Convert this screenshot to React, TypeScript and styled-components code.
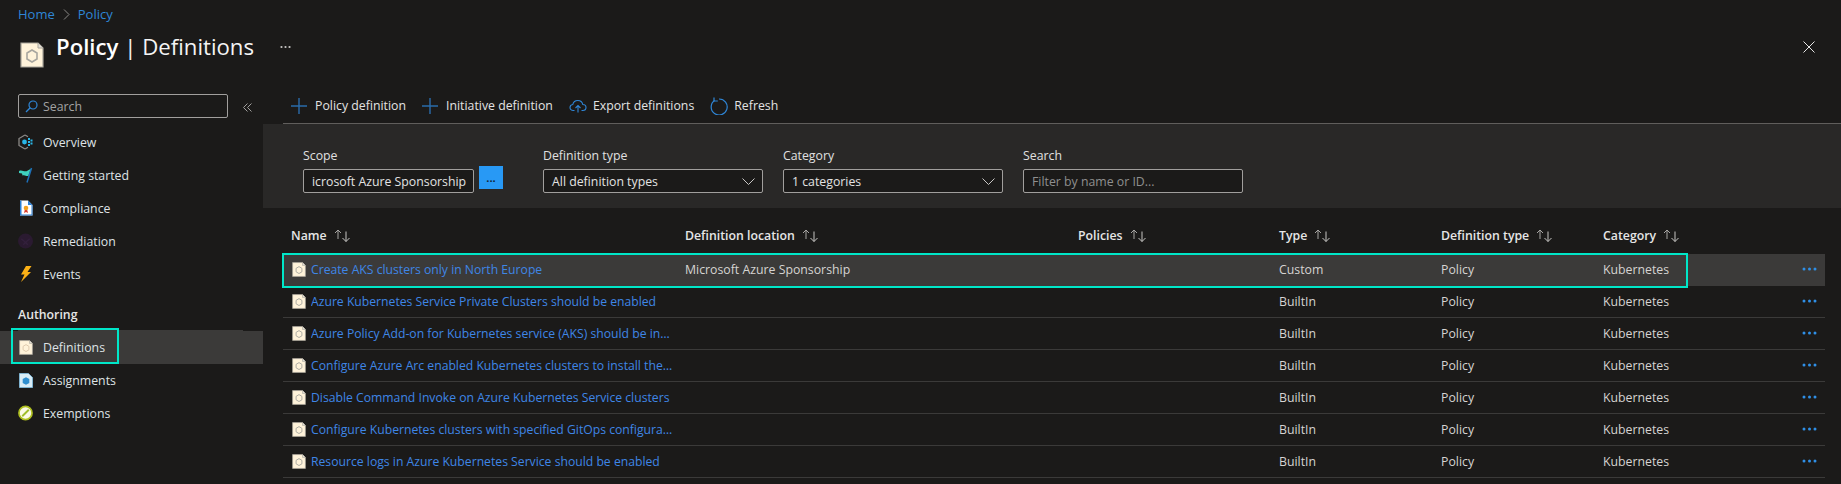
import * as React from "react";
import styled, { createGlobalStyle } from "styled-components";

const GlobalStyle = createGlobalStyle`
  html, body {
    margin: 0;
    background: #1b1a19;
    font-family: "Open Sans", "Noto Sans", sans-serif;
    font-size: 12.3px;
    color: #dcdcdc;
  }
`;

const Page = styled.div`
  width: 1841px;
  height: 484px;
  overflow: hidden;
  display: flex;
  flex-direction: column;
  background: #1b1a19;
`;

const Breadcrumb = styled.div`
  height: 28px;
  padding-left: 18px;
  display: flex;
  align-items: center;
  gap: 8px;
  color: #2f86d6;
  font-size: 13px;
`;

const Chevron = styled.span`
  display: inline-flex;
  color: #8a8886;
`;

const TitleBar = styled.div`
  height: 60px;
  padding: 0 26px 0 20px;
  display: flex;
  align-items: flex-start;
`;

const TitleIcon = styled.div`
  margin-top: 14px;
  margin-right: 12px;
  display: flex;
`;

const Title = styled.h1`
  margin: 1px 0 0;
  font-size: 22.2px;
  line-height: 35px;
  font-weight: 400;
  color: #f4f4f4;
  b {
    font-weight: 600;
    color: #fff;
  }
`;

const TitleMore = styled.div`
  margin: 17px 0 0 26px;
  display: flex;
`;

const CloseButton = styled.div`
  margin: 13px 0 0 auto;
  display: flex;
`;

const Content = styled.div`
  flex: 1;
  display: flex;
  min-height: 0;
`;

const Sidebar = styled.nav`
  width: 263px;
  flex-shrink: 0;
  padding-top: 6px;
`;

const SearchRow = styled.div`
  height: 32px;
  padding-left: 18px;
  display: flex;
  align-items: flex-start;
`;

const SearchBox = styled.div`
  box-sizing: border-box;
  width: 210px;
  height: 24px;
  border: 1px solid #a19f9d;
  border-radius: 2px;
  padding-left: 6px;
  display: flex;
  align-items: center;
  gap: 5px;
  color: #a3a3a3;
`;

const Collapse = styled.div`
  margin: 9px 0 0 15px;
  display: flex;
`;

const NavItem = styled.div<{ $selected?: boolean }>`
  position: relative;
  height: 33px;
  padding-left: 18px;
  padding-bottom: 1px;
  box-sizing: border-box;
  display: flex;
  align-items: center;
  gap: 10px;
  color: #dfe3e6;
  background: ${(p) => (p.$selected ? "#3b3a39" : "transparent")};
`;

const NavIcon = styled.span`
  width: 15px;
  display: flex;
  justify-content: center;
`;

const NavHeading = styled.div`
  box-sizing: border-box;
  height: 40px;
  margin: 0 20px 0 18px;
  padding-top: 8px;
  line-height: 32px;
  font-weight: 600;
  color: #e6e6e6;
  border-bottom: 1px solid #3b3a39;
`;

const NavHighlight = styled.div`
  position: absolute;
  left: 11px;
  top: -3px;
  width: 108px;
  height: 36px;
  box-sizing: border-box;
  border: 2px solid #00e6c8;
`;

const Main = styled.main`
  flex: 1;
  min-width: 0;
  display: flex;
  flex-direction: column;
`;

const Toolbar = styled.div`
  box-sizing: border-box;
  height: 36px;
  margin-left: 20px;
  padding-left: 8px;
  display: flex;
  align-items: center;
  gap: 16px;
  border-bottom: 1px solid #605e5c;
`;

const ToolButton = styled.div<{ $gap?: number }>`
  display: flex;
  align-items: center;
  gap: ${(p) => p.$gap ?? 8}px;
  color: #e3e3e3;
`;

const FilterPanel = styled.section`
  box-sizing: border-box;
  height: 84px;
  padding: 24px 0 0 40px;
  display: flex;
  gap: 20px;
  background: #292827;
`;

const Field = styled.div`
  width: 220px;
`;

const FieldLabel = styled.div`
  height: 21px;
  line-height: 16px;
  color: #e0e0e0;
`;

const FieldRow = styled.div`
  width: 200px;
  display: flex;
  align-items: flex-start;
  gap: 5px;
`;

const Control = styled.div<{ $placeholder?: boolean }>`
  box-sizing: border-box;
  flex: 1;
  min-width: 0;
  height: 24px;
  padding: 0 7px 0 8px;
  display: flex;
  align-items: center;
  justify-content: space-between;
  background: #1b1a19;
  border: 1px solid #a19f9d;
  border-radius: 2px;
  white-space: nowrap;
  overflow: hidden;
  color: ${(p) => (p.$placeholder ? "#8f8f8f" : "#e3e3e3")};
`;

const PickButton = styled.div`
  width: 24px;
  height: 23px;
  margin-top: -3px;
  display: flex;
  align-items: center;
  justify-content: center;
  background: #2899f5;
  color: #10253a;
  font-weight: 700;
  font-size: 11px;
  line-height: 12px;
`;

const COLUMNS = "394px 393px 201px 162px 162px 1fr 32px";

const Table = styled.div`
  margin: 0 16px 0 20px;
`;

const HeaderRow = styled.div`
  box-sizing: border-box;
  height: 46px;
  padding: 8px 0 0 8px;
  display: grid;
  grid-template-columns: ${COLUMNS};
  align-items: center;
`;

const HeaderCell = styled.div`
  display: flex;
  align-items: center;
  gap: 7px;
  font-weight: 600;
  color: #e6e6e6;
`;

const Row = styled.div<{ $selected?: boolean }>`
  position: relative;
  box-sizing: border-box;
  height: 32px;
  padding-left: 8px;
  display: grid;
  grid-template-columns: ${COLUMNS};
  align-items: center;
  border-bottom: 1px solid ${(p) => (p.$selected ? "transparent" : "#3b3a39")};
  background: ${(p) => (p.$selected ? "#3b3a39" : "transparent")};
  color: #d6d4d2;
`;

const NameCell = styled.div`
  display: flex;
  align-items: center;
  gap: 5px;
  min-width: 0;
  padding: 0 10px 0 1px;
`;

const NameLink = styled.span`
  color: #3f86e6;
  flex: 1;
  min-width: 0;
  max-width: 366px;
  font-size: 12.2px;
  white-space: nowrap;
  overflow: hidden;
  text-overflow: ellipsis;
`;

const RowActions = styled.div`
  display: flex;
  justify-content: flex-end;
  padding: 0 8px 2px 0;
`;

const RowHighlight = styled.div`
  position: absolute;
  left: -1px;
  top: -1px;
  width: 1406px;
  height: 35px;
  box-sizing: border-box;
  border: 2px solid #00e6c8;
  pointer-events: none;
`;

const PolicyIcon = ({ size = 15, faded = false }: { size?: number; faded?: boolean }) => (
  <svg width={size} height={Math.round(size * 1.08)} viewBox="0 0 24 26" preserveAspectRatio="none" style={{ flexShrink: 0 }}>
    <path d="M1 1h17l5 5v19H1z" fill="#fff3da" stroke="#a8a49a" strokeWidth="1.200" />
    <path d="M18 1v5h5" fill="#e4e0d6" stroke="#a8a49a" strokeWidth="1" />
    <path
      d="M12 8l5 3v6l-5 3-5-3v-6z"
      fill="none"
      stroke={faded ? "#dcc8ac" : "#a8a69f"}
      strokeWidth="1.600"
    />
  </svg>
);

const OverviewIcon = () => (
  <svg width="15" height="16" viewBox="0 0 15 16">
    <path d="M7 1L1 4.500v7L7 15" fill="none" stroke="#8a8886" strokeWidth="1.300" />
    <path d="M7 1l3 1.700M7 15l3-1.700" fill="none" stroke="#8a8886" strokeWidth="1.300" />
    <circle cx="6.500" cy="8" r="2.400" fill="#29b6e8" />
    <g fill="#29b6e8">
      <rect x="10" y="4" width="2" height="2" />
      <rect x="12.500" y="5.500" width="2" height="2" />
      <rect x="10" y="7" width="2" height="2" />
      <rect x="12.500" y="8.500" width="2" height="2" />
      <rect x="10" y="10" width="2" height="2" />
    </g>
  </svg>
);

const FlagIcon = () => (
  <svg width="15" height="16" viewBox="0 0 15 16">
    <path d="M9 15.500L13.500 1" stroke="#1d6fb8" strokeWidth="1.500" fill="none" />
    <path d="M1 4c3-1.400 5 1 7.500 .2L12.500 2 10.200 9C8 9.500 7 7.500 4.500 8.500L4 6.500 1 6z" fill="#3fd0bd" />
  </svg>
);

const ComplianceIcon = () => (
  <svg width="14" height="16" viewBox="0 0 14 16">
    <path d="M1 .500h8l4.500 4.500v10.500H1z" fill="#fff" />
    <path d="M9 .500l4.500 4.500H9z" fill="#2a7fd4" />
    <path d="M1 .500h1.500v15H1zM1 14.500h12.500v1H1zM12.500 5h1v10.500h-1z" fill="#2a7fd4" />
    <path d="M6 9l-1 4 2-1 2 1-1-4z" fill="#d8392b" />
    <circle cx="7" cy="8" r="2.300" fill="#f4a21e" />
  </svg>
);

const RemediationIcon = () => (
  <svg width="16" height="16" viewBox="0 0 16 16">
    <circle cx="8" cy="8" r="8" fill="#2a1a30" />
    <path d="M3.500 5.500L8 9.500l4.500-4M5.500 12L8 9.500l2.500 2.500" stroke="#33203c" strokeWidth="1.500" fill="none" />
  </svg>
);

const BoltIcon = () => (
  <svg width="12" height="16" viewBox="0 0 12 16">
    <path d="M6 0h5.500L7.500 6H11L1 16l3.500-7.500H1z" fill="#fcb116" />
  </svg>
);

const AssignmentIcon = () => (
  <svg width="14" height="15" viewBox="0 0 14 15">
    <path d="M.5.500h9l4 4v10H.5z" fill="#d9edf7" stroke="#7fb2cf" />
    <path d="M7 4.200l3.300 1.900v3.800L7 11.800 3.700 9.900V6.100z" fill="#2f8fd0" />
  </svg>
);

const ExemptionIcon = () => (
  <svg width="16" height="16" viewBox="0 0 16 16">
    <circle cx="8" cy="8" r="7" fill="#fbf9e6" stroke="#aebf1f" strokeWidth="1.800" />
    <path d="M4.500 11.500l7-7" stroke="#9fbd2a" strokeWidth="2" />
  </svg>
);

const SearchGlyph = () => (
  <svg width="13" height="13" viewBox="0 0 13 13">
    <circle cx="8" cy="5" r="4" fill="none" stroke="#2f86d6" strokeWidth="1.200" />
    <path d="M5.200 7.800L1 12" stroke="#2f86d6" strokeWidth="1.300" />
  </svg>
);

const PlusGlyph = () => (
  <svg width="16" height="16" viewBox="0 0 16 16">
    <path d="M8 0v16M0 8h16" stroke="#2a6cab" strokeWidth="1.400" />
  </svg>
);

const CloudGlyph = () => (
  <svg width="18" height="14" viewBox="0 0 18 14">
    <path
      d="M5.500 11.500H4.200C2.400 11.500 1 10.200 1 8.500 1 6.900 2.200 5.700 3.800 5.500 4.300 3.200 6.300 1.500 8.800 1.500c2.500 0 4.500 1.700 5 4 1.800 0 3.200 1.300 3.200 3 0 1.700-1.400 3-3.200 3h-1.300"
      fill="none"
      stroke="#2f86d6"
      strokeWidth="1.100"
    />
    <path d="M9 13.500V6.500M6.500 9L9 6.500 11.500 9" fill="none" stroke="#2f86d6" strokeWidth="1.100" />
  </svg>
);

const RefreshGlyph = () => (
  <svg width="18" height="18" viewBox="0 0 18 18">
    <path d="M4.500 3.500a8 8 0 1 0 4.500-1.500" fill="none" stroke="#2f86d6" strokeWidth="1.200" />
    <path d="M4 .5v3.500h3.800" fill="none" stroke="#2f86d6" strokeWidth="1.200" />
  </svg>
);

const CaretGlyph = () => (
  <svg width="13" height="7" viewBox="0 0 13 7">
    <path d="M.5.500l6 6 6-6" fill="none" stroke="#c8c6c4" strokeWidth="1" />
  </svg>
);

const SortGlyph = () => (
  <svg width="16" height="13" viewBox="0 0 16 13">
    <path d="M4 10V1M1 4l3-3 3 3" fill="none" stroke="#a8a6a4" strokeWidth="1" />
    <path d="M12 2.500v10M8.500 9l3.500 3.500L15.500 9" fill="none" stroke="#c8c6c4" strokeWidth="1" />
  </svg>
);

const Dots = ({ color, size = 15 }: { color: string; size?: number }) => (
  <svg width={size} height="4" viewBox="0 0 15 4">
    <circle cx="2" cy="2" r="1.500" fill={color} />
    <circle cx="7.500" cy="2" r="1.500" fill={color} />
    <circle cx="13" cy="2" r="1.500" fill={color} />
  </svg>
);

const navTop = [
  { label: "Overview", icon: <OverviewIcon /> },
  { label: "Getting started", icon: <FlagIcon /> },
  { label: "Compliance", icon: <ComplianceIcon /> },
  { label: "Remediation", icon: <RemediationIcon /> },
  { label: "Events", icon: <BoltIcon /> },
];

const headers = ["Name", "Definition location", "Policies", "Type", "Definition type", "Category"];

const rows = [
  { name: "Create AKS clusters only in North Europe", location: "Microsoft Azure Sponsorship", type: "Custom" },
  { name: "Azure Kubernetes Service Private Clusters should be enabled", location: "", type: "BuiltIn" },
  { name: "Azure Policy Add-on for Kubernetes service (AKS) should be installed and enabled on your clusters", location: "", type: "BuiltIn" },
  { name: "Configure Azure Arc enabled Kubernetes clusters to install the Azure Policy extension", location: "", type: "BuiltIn" },
  { name: "Disable Command Invoke on Azure Kubernetes Service clusters", location: "", type: "BuiltIn" },
  { name: "Configure Kubernetes clusters with specified GitOps configuration using no secrets", location: "", type: "BuiltIn" },
  { name: "Resource logs in Azure Kubernetes Service should be enabled", location: "", type: "BuiltIn" },
];

export default function App() {
  return (
    <Page>
      <GlobalStyle />
      <Breadcrumb>
        <span>Home</span>
        <Chevron>
          <svg width="7" height="11" viewBox="0 0 7 11">
            <path d="M1 .5l5 5-5 5" fill="none" stroke="currentColor" />
          </svg>
        </Chevron>
        <span>Policy</span>
      </Breadcrumb>
      <TitleBar>
        <TitleIcon>
          <PolicyIcon size={24} />
        </TitleIcon>
        <Title>
          <b>Policy</b> | Definitions
        </Title>
        <TitleMore>
          <Dots color="#c8c6c4" size={11} />
        </TitleMore>
        <CloseButton>
          <svg width="12" height="12" viewBox="0 0 12 12">
            <path d="M.5.500l11 11M11.500.500l-11 11" stroke="#e6e6e6" strokeWidth="1" />
          </svg>
        </CloseButton>
      </TitleBar>
      <Content>
        <Sidebar>
          <SearchRow>
            <SearchBox>
              <SearchGlyph />
              Search
            </SearchBox>
            <Collapse>
              <svg width="9" height="9" viewBox="0 0 9 9">
                <path d="M4.500.500l-4 4 4 4M8.500.500l-4 4 4 4" fill="none" stroke="#a19f9d" />
              </svg>
            </Collapse>
          </SearchRow>
          {navTop.map((item) => (
            <NavItem key={item.label}>
              <NavIcon>{item.icon}</NavIcon>
              {item.label}
            </NavItem>
          ))}
          <NavHeading>Authoring</NavHeading>
          <NavItem $selected>
            <NavIcon>
              <PolicyIcon size={14} faded />
            </NavIcon>
            Definitions
            <NavHighlight />
          </NavItem>
          <NavItem>
            <NavIcon>
              <AssignmentIcon />
            </NavIcon>
            Assignments
          </NavItem>
          <NavItem>
            <NavIcon>
              <ExemptionIcon />
            </NavIcon>
            Exemptions
          </NavItem>
        </Sidebar>
        <Main>
          <Toolbar>
            <ToolButton>
              <PlusGlyph />
              Policy definition
            </ToolButton>
            <ToolButton>
              <PlusGlyph />
              Initiative definition
            </ToolButton>
            <ToolButton $gap={6}>
              <CloudGlyph />
              Export definitions
            </ToolButton>
            <ToolButton $gap={6}>
              <RefreshGlyph />
              Refresh
            </ToolButton>
          </Toolbar>
          <FilterPanel>
            <Field>
              <FieldLabel>Scope</FieldLabel>
              <FieldRow>
                <Control>icrosoft Azure Sponsorship</Control>
                <PickButton>...</PickButton>
              </FieldRow>
            </Field>
            <Field>
              <FieldLabel>Definition type</FieldLabel>
              <Control>
                All definition types
                <CaretGlyph />
              </Control>
            </Field>
            <Field>
              <FieldLabel>Category</FieldLabel>
              <Control>
                1 categories
                <CaretGlyph />
              </Control>
            </Field>
            <Field>
              <FieldLabel>Search</FieldLabel>
              <Control $placeholder>Filter by name or ID...</Control>
            </Field>
          </FilterPanel>
          <Table>
            <HeaderRow>
              {headers.map((h) => (
                <HeaderCell key={h}>
                  {h}
                  <SortGlyph />
                </HeaderCell>
              ))}
            </HeaderRow>
            {rows.map((r, i) => (
              <Row key={r.name} $selected={i === 0}>
                <NameCell>
                  <PolicyIcon size={14} />
                  <NameLink>{r.name}</NameLink>
                </NameCell>
                <div>{r.location}</div>
                <div />
                <div>{r.type}</div>
                <div>Policy</div>
                <div>Kubernetes</div>
                <RowActions>
                  <Dots color="#2f8fe6" />
                </RowActions>
                {i === 0 && <RowHighlight />}
              </Row>
            ))}
          </Table>
        </Main>
      </Content>
    </Page>
  );
}
